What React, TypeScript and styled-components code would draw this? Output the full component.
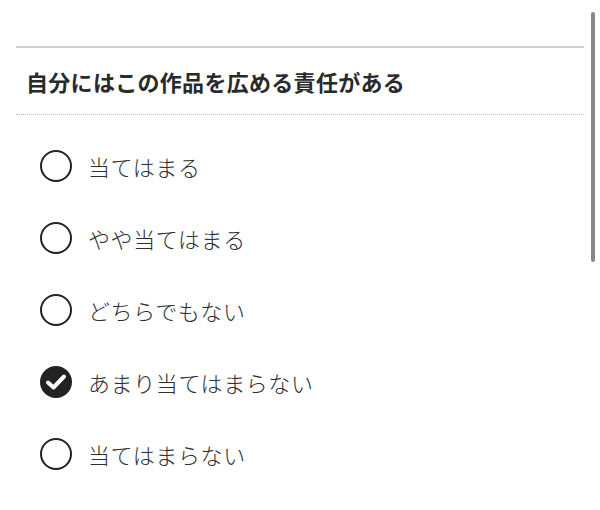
import React, { useState } from "react";
import styled, { createGlobalStyle } from "styled-components";

const GlobalStyle = createGlobalStyle`
  html, body {
    margin: 0;
    padding: 0;
    background: #fff;
  }
  body {
    font-family: "Noto Sans CJK JP", "Noto Sans", sans-serif;
    color: #333;
  }
`;

const options = [
  "当てはまる",
  "やや当てはまる",
  "どちらでもない",
  "あまり当てはまらない",
  "当てはまらない",
];

export default function App() {
  const [selected, setSelected] = useState(3);

  return (
    <>
      <GlobalStyle />
      <Page>
        <Question>
          <Title>自分にはこの作品を広める責任がある</Title>
          <List>
            {options.map((label, index) => (
              <Option key={index} onClick={() => setSelected(index)}>
                <Radio checked={selected === index}>
                  {selected === index && (
                    <svg width="22" height="18" viewBox="0 0 22 18">
                      <path
                        d="M3 9.5 L8.5 14.5 L19 3.5"
                        fill="none"
                        stroke="#fff"
                        strokeWidth="4"
                        strokeLinecap="round"
                        strokeLinejoin="round"
                      />
                    </svg>
                  )}
                </Radio>
                <Label>{label}</Label>
              </Option>
            ))}
          </List>
        </Question>
        <ScrollThumb />
      </Page>
    </>
  );
}

const Page = styled.div`
  position: relative;
  width: 600px;
  height: 510px;
  overflow: hidden;
  padding: 46px 16px 0 16px;
  box-sizing: border-box;
`;

const Question = styled.section`
  border-top: 2px solid #cfcfcf;
`;

const Title = styled.h2`
  margin: 0;
  height: 66px;
  display: flex;
  align-items: center;
  padding: 0 10px;
  font-size: 22px;
  font-weight: 700;
  letter-spacing: 0.3px;
  color: #2a2a2a;
  border-bottom: 1px dotted #b8b8b8;
`;

const List = styled.div`
  display: flex;
  flex-direction: column;
  padding-top: 15px;
`;

const Option = styled.label`
  display: flex;
  align-items: center;
  height: 72px;
  padding-left: 24px;
  gap: 16px;
  cursor: pointer;
`;

const Radio = styled.span<{ checked: boolean }>`
  width: 32px;
  height: 32px;
  box-sizing: border-box;
  border-radius: 50%;
  border: 2px solid #222;
  background: ${(p) => (p.checked ? "#222" : "#fff")};
  display: flex;
  align-items: center;
  justify-content: center;
  flex-shrink: 0;
`;

const Label = styled.span`
  font-size: 22px;
  font-weight: 300;
  letter-spacing: 0.6px;
  color: #2e2e2e;
  line-height: 1;
`;

const ScrollThumb = styled.div`
  position: absolute;
  top: 12px;
  right: 5px;
  width: 4px;
  height: 250px;
  border-radius: 2px;
  background: #888;
`;
